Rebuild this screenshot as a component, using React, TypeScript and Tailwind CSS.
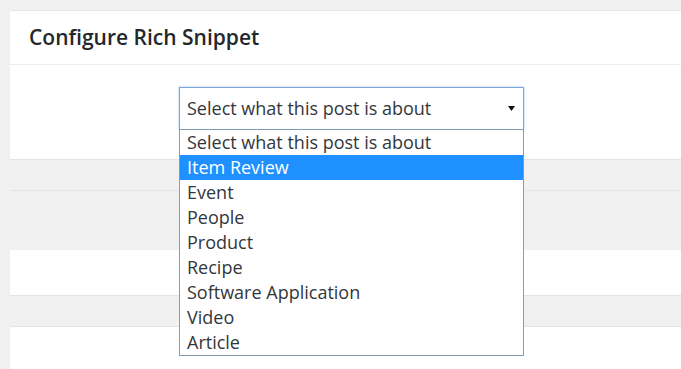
import React from 'react';

const options = [
    'Select what this post is about',
    'Item Review',
    'Event',
    'People',
    'Product',
    'Recipe',
    'Software Application',
    'Video',
    'Article',
];

function Arrow() {
    return (
        <svg width="7" height="5" viewBox="0 0 7 5" className="shrink-0">
            <path d="M0 0h7L3.5 5z" fill="#111" />
        </svg>
    )
}

function SnippetSelect() {
    const [selected, ] = React.useState(1);
    return (
        <div className="relative w-[345px]">
            <div className="h-[43px] flex items-center justify-between pl-[7px] pr-[8px] bg-white border border-[#7ea6d8] shadow-[0_0_2px_rgba(91,157,217,0.6)] text-[18px] text-[#32373c]">
                <span>Select what this post is about</span>
                <Arrow />
            </div>
            {/* NOTE: the open list lies over the panels below */}
            <ul className="absolute left-0 top-[42px] w-[345px] bg-white border border-[#7f9db9] z-10 text-[18px] text-[#32373c]">
                {options.map((o, i) => (
                    <li key={i} className={'h-[25px] flex items-center pl-[7px] ' + (i === selected ? 'bg-[#1e90ff] text-white' : '')}>{o}</li>
                ))}
            </ul>
        </div>
    )
}

function App() {
    const cnCard = 'bg-white border-t border-[#e5e5e5] shadow-[0_1px_1px_rgba(0,0,0,0.05)]'

    return (
    <div className="w-[681px] h-[369px] overflow-hidden bg-[#f1f1f1] pl-[10px] pt-[10px] font-['Open_Sans',sans-serif]">
        <div className="w-[700px]">
            <div className={cnCard}>
                <div className="h-[54px] flex items-center pl-[19px] border-b border-[#eeeeee]">
                    <h2 className="text-[21px] font-semibold text-[#23282d]">Configure Rich Snippet</h2>
                </div>
                <div className="h-[94px] pt-[22px] pl-[169px]">
                    <SnippetSelect />
                </div>
            </div>

            <div className="mt-[31px] h-[60px] border-t border-[#e5e5e5] bg-[#f0f0f0]"></div>

            <div className="h-[45px] bg-white shadow-[0_1px_1px_rgba(0,0,0,0.05)]"></div>

            <div className="mt-[31px] h-[60px] bg-white border-t border-[#e5e5e5]"></div>
        </div>
    </div>
    );
}

export default App;
